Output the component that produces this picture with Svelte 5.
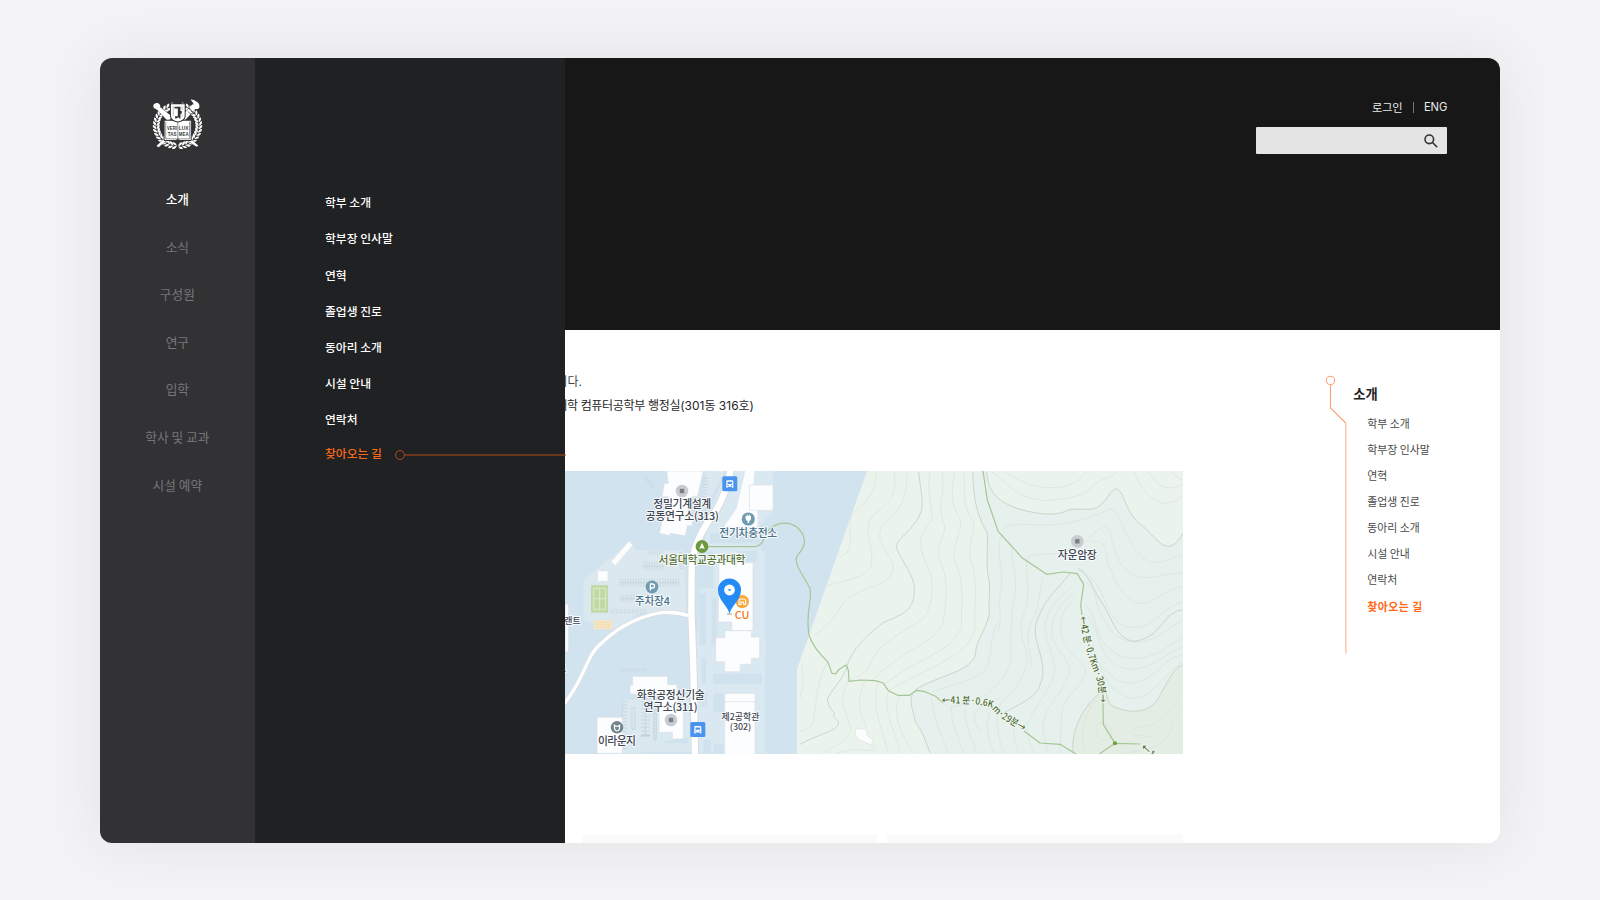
<script>
  const mainMenu = ['소개', '소식', '구성원', '연구', '입학', '학사 및 교과', '시설 예약'];
  const subMenu = ['학부 소개', '학부장 인사말', '연혁', '졸업생 진로', '동아리 소개', '시설 안내', '연락처', '찾아오는 길'];

  // Laurel leaves around the crest: pairs placed along an ellipse, left and right.
  const leaves = [];
  for (let i = 0; i < 17; i++) {
    const deg = 97 + i * 9.8;
    const a = (deg * Math.PI) / 180;
    for (const side of [1, -1]) {
      const x = 112 + side * Math.cos(a) * 65;
      const y = 109 + Math.sin(a) * 62;
      leaves.push({ x, y, r: side === 1 ? deg + 90 : 90 - deg });
    }
  }

  // Parking bays drawn as short combs: [x, y, count, height, step]
  const bays = [
    [180, 340, 23, 13, 8], [180, 353, 23, 12, 8], [252, 290, 8, 14, 8], [252, 304, 8, 12, 8], [268, 257, 6, 14, 8],
    [183, 388, 7, 12, 8], [183, 401, 7, 12, 8], [153, 432, 14, 14, 8], [183, 610, 10, 10, 8]
  ];

  // Fine contour lines on the hillside.
  const contours = [
    'M228 20C230 110 170 120 155 155C140 195 160 210 148 250C140 265 130 270 118 280',
    'M283 20C290 100 270 110 220 150C185 190 220 240 215 290C215 330 160 340 82 362',
    'M320 20C325 130 280 140 247 185C220 230 270 260 279 300C282 360 210 360 150 395C120 415 110 470 40 512',
    'M390 20C375 110 415 150 385 180C350 220 360 250 380 300C410 350 395 430 370 460C300 510 240 530 215 590C200 625 185 630 150 645',
    'M425 20C440 90 405 120 435 180C430 240 400 240 425 300C450 350 435 430 428 480C400 530 330 550 270 600Q240 620 220 645',
    'M463 20C455 90 450 110 480 160C490 205 460 220 462 280C500 360 480 430 485 480C470 550 380 570 300 625L250 660',
    'M490 20C500 90 480 110 520 170C530 200 505 220 510 280C540 360 520 430 525 490C510 560 430 590 360 625L270 675',
    'M575 20C640 70 650 100 740 107C820 100 860 90 880 60C900 40 930 45 950 20',
    'M610 20C680 60 720 75 790 65C840 50 850 30 860 20',
    'M1000 20C1030 80 1060 115 1100 115C1130 110 1140 100 1148 90', 'M1045 20C1070 65 1100 80 1148 60', 'M1115 20Q1130 40 1148 45',
    'M600 470C570 500 580 540 565 590C560 640 480 650 400 680',
    'M612 195C620 170 680 180 740 180C860 175 900 140 935 132C970 150 960 200 1020 270C1060 315 1110 280 1148 270',
    'M605 210C585 250 610 310 604 370C590 420 610 450 595 500',
    'M635 240C630 280 655 330 645 390C630 440 640 480 630 520C640 580 630 620 590 660C560 700 500 710 450 730',
    'M680 300C670 260 720 270 780 265C860 260 870 190 920 185C940 200 930 250 965 300C1020 370 1080 320 1148 325',
    'M680 300C680 350 690 390 675 440C640 500 690 550 680 600C660 670 620 690 600 720C580 760 600 830 610 865',
    'M730 335C715 380 720 430 700 460C670 510 690 570 695 600',
    'M870 230C930 220 910 270 930 310C960 390 1000 430 1050 410C1090 390 1110 370 1148 365',
    'M830 315C880 330 900 370 920 420C950 490 990 500 1050 475C1090 440 1120 420 1148 410',
    'M850 345C900 380 880 420 910 460C950 540 1010 540 1060 520C1100 500 1120 480 1148 465',
    'M820 360C780 400 740 420 735 490C740 540 760 560 765 610C760 680 680 740 680 800Q690 840 700 865',
    'M820 385C785 415 755 450 755 500C760 560 800 560 810 620C790 690 720 730 730 800L745 865',
    'M825 400C790 430 780 460 782 500C790 550 830 580 850 600C880 640 800 680 785 740L780 865',
    'M855 420C890 450 880 490 910 530C950 590 1020 590 1080 560Q1110 540 1148 520',
    'M860 450C890 480 890 520 910 560C950 630 1020 620 1070 590Q1110 560 1148 545',
    'M880 540C890 600 920 620 950 645C1000 670 1050 640 1080 610Q1120 570 1148 570',
    'M900 600C920 660 950 690 1000 700C1060 695 1080 640 1148 590',
    'M540 800C500 740 540 720 600 700', 'M455 725C450 780 480 820 490 865', 'M495 730C490 780 520 820 530 865', 'M395 700C400 770 430 820 445 865', 'M570 740C550 790 570 830 580 865', 'M640 790Q640 830 655 865',
    'M300 692C270 740 310 820 340 865', 'M265 680C245 740 290 800 300 865', 'M235 655C210 720 250 800 265 865', 'M145 648C100 720 160 760 150 800C130 840 100 840 70 865', 'M195 648C160 720 190 760 200 790',
    'M200 835C240 840 230 860 190 855C150 850 130 860 110 865', 'M85 590C50 640 50 710 40 770C30 800 10 790 0 800', 'M5 600Q15 650 0 700',
    'M890 800C880 760 920 770 935 795C940 830 900 840 890 800', 'M860 865C830 800 860 740 890 700', 'M960 865C1000 860 1060 860 1100 820C1120 790 1110 770 1148 740', 'M990 800C1000 780 1060 790 1090 760C1110 740 1110 720 1148 700', 'M1000 810L1060 815'
  ];
  const majors = [
    'M356 20C365 110 380 130 340 180C320 210 285 225 290 250C310 300 345 330 343 380C340 430 320 445 250 472C190 520 150 560 138 615C110 670 80 690 83 708C90 740 110 740 100 755C150 790 70 800 0 838',
    'M518 20C520 100 530 150 562 205C565 260 555 300 568 350C570 400 565 420 568 450C550 510 530 520 526 570C510 620 420 630 350 672C315 700 345 740 345 770C370 800 375 830 392 865',
    'M560 20C565 90 600 110 650 130C720 150 770 155 810 133L880 132C920 120 930 70 950 71C980 90 970 140 1030 185C1070 220 1080 245 1110 244Q1135 235 1148 205',
    'M820 865C810 800 850 720 905 680C930 670 910 720 950 728C1000 750 1060 740 1080 690C1110 640 1120 610 1148 600',
    'M835 310C870 330 880 380 910 420C940 470 950 520 1000 529C1060 525 1080 480 1110 450Q1130 435 1148 435',
    'M810 325C760 390 740 390 710 470C690 530 750 590 720 660C710 700 650 720 600 750'
  ];
</script>

{#snippet bus(x, y)}
  <g transform="translate({x} {y})">
    <rect width="15" height="15" rx="1.5" fill="#4a93ef" />
    <path d="M4 11.5V5.2Q4 4 5.2 4H9.8Q11 4 11 5.2V11.5H9.7V10.5H5.3V11.5ZM5.2 5.4V7.7H9.8V5.4ZM5 8.8V9.6H6.3V8.8ZM8.7 8.8V9.6H10V8.8Z" fill="#fff" fill-rule="evenodd" />
  </g>
{/snippet}

{#snippet place(x, y)}
  <circle cx={x} cy={y} r="6.3" fill="#c9cbcf" />
  <rect x={x - 2.2} y={y - 2.2} width="4.4" height="4.4" fill="#72808a" />
{/snippet}

<div class="stage">
  <div class="window">
    <nav class="rail">
      <svg class="crest" viewBox="34 24 156 156" aria-hidden="true">
        <g fill="#fff">
          {#each leaves as l}
            <g transform="translate({l.x} {l.y}) rotate({l.r})">
              <path d="M-6 0Q-1 -13 8 -10Q6 0 -6 0Z" />
              <path d="M-6 1Q-1 13 8 10Q6 1 -6 1Z" />
            </g>
          {/each}
        </g>
        <g fill="#fff" stroke="#323234" stroke-width="2" paint-order="stroke">
          <path d="M44 57C34 52 37 39 49 39C56 39 61 46 59 52L97 82L83 95L52 62Q49 59 44 57Z" />
          <path d="M152 29Q163 28 168 34Q181 40 179 52Q177 60 166 58L158 65L148 54L155 46Q159 41 162 45Q160 36 152 29Z" />
          <path d="M146 57L157 68L130 97L118 84Z" />
          <path d="M48 170L69 151L75 157L57 172L53 175ZM176 170L151 148L144 155L170 173Z" />
        </g>
        <path d="M153 63L163 72L153 73L143 65" fill="none" stroke="#323234" stroke-width="2" />
        <path d="M71 92H154V154H119L113 150L107 154H71Z" fill="#fff" stroke="#323234" stroke-width="3" />
        <path d="M76 97V149H109L113 146L117 149H149V97M113 96V148" fill="none" stroke="#5b5b5d" stroke-width="2" />
        <path d="M89 40H137V80Q135 97 113 99Q91 97 89 80Z" fill="#323234" />
        <path d="M92 43H134V79Q133 92 113 96Q93 92 92 79Z" fill="#fff" />
        <path d="M103 51H121V64H125V72H121V88L114 83L106 88L104 80H113V56H103Z" fill="#323234" />
        <path d="M99 49V78M126 49V60M126 75V80" stroke="#999" stroke-width="2" />
        <g class="motto" fill="#3a3a3c">
          <text x="80" y="122" textLength="30" lengthAdjust="spacingAndGlyphs">VERI</text>
          <text x="116" y="122" textLength="30" lengthAdjust="spacingAndGlyphs">LUX</text>
          <text x="82" y="140" textLength="27" lengthAdjust="spacingAndGlyphs">TAS</text>
          <text x="116" y="140" textLength="30" lengthAdjust="spacingAndGlyphs">MEA</text>
        </g>
      </svg>
      <ul>
        {#each mainMenu as item, i}
          <li class:active={i === 0}>{item}</li>
        {/each}
      </ul>
    </nav>

    <nav class="panel">
      <ul>
        {#each subMenu as item, i}
          <li class:current={i === 7}>
            <span>{item}</span>
            {#if i === 7}
              <svg class="thread" viewBox="0 0 171 10"><circle cx="5" cy="5" r="4.4" /><path d="M9.5 5H171" /></svg>
            {/if}
          </li>
        {/each}
      </ul>
    </nav>

    <div class="page">
      <header>
        <div class="tools"><span class="login">로그인</span><i></i><span>ENG</span></div>
        <div class="search">
          <svg viewBox="0 0 14 14"><circle cx="5.3" cy="5.3" r="4.3" /><path d="M8.5 8.5L13.2 13.2" /></svg>
        </div>
      </header>

      <div class="body">
        <main>
          <div class="copy">
            <p>니다.</p>
            <p><span class="tight">대학 컴퓨터공학부 행정실</span>(301동 316호)</p>
          </div>

          <svg class="map" viewBox="565 471 618 283">
            <rect x="565" y="471" width="618" height="283" fill="#d1e3ef" />
            <g transform="translate(560 465) scale(.33333)">
              <path d="M70 345L215 225L228 255H372L378 440L340 445H240L165 490L70 465Z" fill="#dbe8f0" />
              <path d="M460 110L500 18H640V140L600 180L585 235L615 265V865H410L408 570L430 240Z" fill="#dae8f1" />
              <path d="M440 18H495L440 120L415 150Z" fill="#dbe8f0" />
              <path d="M185 705H395V865H185Z" fill="#dae8f0" />
              <g fill="#cfe2ee">
                <path d="M418 260H460V370H418ZM418 385H438V540H418ZM455 400H470V540H455ZM425 580H438V655H425ZM460 627H606V658H460ZM425 680H440V725H425ZM460 685H495V742H460ZM430 825H452V865H430ZM462 838H490V865H462ZM535 258H590V290H535ZM310 830L365 820H385V835H310ZM248 860H395V865H248ZM450 205H585V235H450Z" />
              </g>
              <g stroke="#c3d0d9" stroke-width="2" fill="none">
                {#each bays as [x, y, n, h, s]}
                  {#each Array(n) as _, k}
                    <path d="M{x + k * s} {y}v{h}" />
                  {/each}
                {/each}
                <path d="M180 353H356M252 304H312M183 401H235" />
                {#each Array(15) as _, k}
                  <path d="M187 {710 + k * 10}h14M243 {710 + k * 11 > 812 ? 812 : 710 + k * 11}h26M281 {728 + k * 7}h8" />
                {/each}
                <path d="M187 705V790M216 728h9v65h-9zM256 700V815M281 725v97h8V725" />
                {#each Array(8) as _, k}
                  <path d="M{250 + k * 4} {38 + k * 5}l9 -7M{430 - k} {40 + k * 9}h16M358 {262 + k * 7}h14" />
                {/each}
              </g>
              <!-- buildings -->
              <g fill="#fcfdfe" stroke="#dcdfe5" stroke-width="2">
                <path d="M320 18H430L412 95H396L390 120L383 152H397V182H382L376 212L331 205L329 212L298 205L308 160H320L326 95H306L313 55H325Z" />
                <path d="M556 18H583L580 60H568V135H592V185H492L530 130Z" stroke="none" />
                <path d="M568 60H639V136H568Z" />
                <path d="M206 229L219 240L166 302L153 290Z" />
                <path d="M112 317H144V349H112ZM16 418H25V560H16Z" />
                <path d="M477 293H579V497H515V471H475Z" />
                <path d="M495 497H574V516H599V580H574V598H541V620H494V590H467V518H495Z" />
                <path d="M218 634H323V659H351V735H370V822H337V802H297V690H250L210 686V660H218Z" />
                <path d="M111 757H187V865H111Z" />
                <path d="M494 685H585V870H494ZM494 710H585" />
              </g>
              <rect x="93" y="360" width="51" height="83" fill="#c1daa5" />
              <path d="M101 370h36v63h-36zM119 370v63M101 401h36" fill="none" stroke="#e8f1da" stroke-width="2" />
              <rect x="101" y="466" width="55" height="27" fill="#f7e6c4" />
              <path d="M108 472h40v15h-40zM128 472v15M108 479h40" fill="none" stroke="#e8ca91" />
              <!-- roads -->
              <g fill="none" stroke-linejoin="round">
                <path d="M10 720C80 635 75 570 130 530C180 480 250 450 310 442Q350 440 390 453" stroke="#d9dce1" stroke-width="14" />
                <path d="M512 14C500 70 480 125 455 155C415 210 397 260 395 310L394 435L400 600L405 870" stroke="#d8dce2" stroke-width="25" />
                <path d="M10 720C80 635 75 570 130 530C180 480 250 450 310 442Q350 440 390 453" stroke="#fff" stroke-width="10" />
                <path d="M512 14C500 70 480 125 455 155C415 210 397 260 395 310L394 435L400 600L405 870" stroke="#fff" stroke-width="19" />
              </g>
            </g>

            <!-- hillside -->
            <g transform="translate(800 465) scale(.33333)">
              <path d="M201 18H1150V868H-9V612Z" fill="#ebf3ed" />
              <path d="M518 18C520 100 530 150 562 205C565 260 555 300 568 350V450C550 510 530 520 526 570C510 620 420 630 350 672C315 700 345 740 345 770C370 800 375 830 392 868H1150V205Q1135 235 1110 244C1080 245 1070 220 1030 185C970 140 980 90 950 71C930 70 920 120 880 132L810 133C770 155 720 150 650 130C600 110 565 90 560 18Z" fill="#e6f0ec" />
              <path d="M820 868C810 800 850 720 905 680C930 670 910 720 950 728C1000 750 1060 740 1080 690C1110 640 1120 610 1150 600V868Z" fill="#e3ede4" />
              <g fill="none" stroke="#d9e2da" stroke-width="2">
                {#each contours as d}<path {d} />{/each}
              </g>
              <g fill="none" stroke="#c4cfc5" stroke-width="2.5">
                {#each majors as d}<path {d} />{/each}
              </g>
              <path d="M168 792H198L202 812L218 824L214 840L180 826L166 812Z" fill="#fbfdfc" stroke="#dfe3df" stroke-width="2" />
              <g fill="none" stroke="#a4c693" stroke-width="3.5" stroke-linejoin="round">
                <path d="M-274 245H-135C-105 240 -113 215 -90 190C-55 165 -15 170 7 205C25 240 0 260 -10 275C-18 300 10 330 30 370C38 410 15 440 27 510C40 550 65 570 84 592L96 625L108 626L116 614L138 600L145 615L147 649L182 645L225 647L250 654L265 677L293 691H328L350 676L375 680L407 694L430 714" />
                <path d="M549 18L562 105L595 200L668 280L740 328L790 321L832 326L851 358L842 420L846 450M909 713L910 778L945 835L1020 837M945 835L898 867M672 798L720 834L780 838L828 867" />
              </g>
              <circle cx="945" cy="835" r="6" fill="#739b45" />
              <path id="trail-a" d="M426 717Q520 711 572 727Q588 750 610 763L680 806" fill="none" />
              <path id="trail-b" d="M838 455Q852 550 880 615Q901 665 898 725" fill="none" />
              <g class="trail">
                <text><textPath href="#trail-a" textLength="270" lengthAdjust="spacingAndGlyphs">←41 분·0.6Km·29분→</textPath></text>
                <text><textPath href="#trail-b" textLength="266" lengthAdjust="spacingAndGlyphs">←42 분·0.7Km·30분→</textPath></text>
                <text transform="translate(1020 850) rotate(42)">←1</text>
              </g>
            </g>

            {@render place(682, 491)}
            {@render place(1077.3, 541.3)}
            {@render place(671, 720)}
            {@render bus(722.3, 476.3)}
            {@render bus(690.3, 722)}

            <circle cx="748.3" cy="519" r="6.6" fill="#6f9bb0" />
            <path d="M745.6 515.8h1.2v-1.4h.8v1.4h1.4v-1.4h.8v1.4h1.2v3q-.3 1.8-1.8 2.2v2h-1.6v-2q-1.7-.4-2-2.2Z" fill="#fff" />
            <circle cx="702" cy="546.5" r="6.4" fill="#6b993d" />
            <path d="M702 542.8L704.8 549L702 548L699.2 549Z" fill="#fff" />
            <circle cx="652" cy="587" r="6.4" fill="#6f9bb0" />
            <path d="M650.4 590.5V584h2.1a2 2 0 0 1 0 4h-2.1" fill="none" stroke="#fff" stroke-width="1.3" />
            <circle cx="617" cy="727.3" r="6.2" fill="#71838d" />
            <path d="M614.4 725.2Q614 731 617 731Q620 731 619.6 725.2Q617 727.5 614.4 725.2Z" fill="none" stroke="#fff" stroke-width="1.2" />
            <circle cx="742.3" cy="601.5" r="6.6" fill="#f9a63b" />
            <path d="M739 604.5V600.5Q739 599 740.5 599H744Q745.7 599 745.7 600.5V604.5H743.7V602H741V604.5Z" fill="none" stroke="#fff" stroke-width="1.1" />
            <path d="M729.5 614C728 606 718 600 718 590A11.5 11.5 0 0 1 741 590C741 600 731 606 729.5 614Z" fill="#248af6" />
            <circle cx="729.5" cy="590" r="5.4" fill="#fff" />
            <path d="M727.5 589.2H731.5L729.5 591.3Z" fill="#248af6" />
            <path d="M727 614H732" stroke="#8d9cab" stroke-width="1" />

            <g class="labels">
              <text x="682.3" y="508" textLength="58">정밀기계설계</text>
              <text x="682.3" y="520" textLength="73">공동연구소(313)</text>
              <text class="steel" x="748.3" y="536.7" textLength="58">전기차충전소</text>
              <text class="green" x="702" y="563.7" textLength="87">서울대학교공과대학</text>
              <text class="steel" x="652.3" y="604.5" textLength="35">주차장4</text>
              <text class="orange" x="742" y="618.6">CU</text>
              <text class="small" x="572.5" y="624">랜트</text>
              <text class="small" x="562" y="672">로</text>
              <text x="670.8" y="699" textLength="68">화학공정신기술</text>
              <text x="670.5" y="711" textLength="54">연구소(311)</text>
              <text class="small" x="740.5" y="720" textLength="38">제2공학관</text>
              <text class="small" x="740.5" y="730">(302)</text>
              <text x="617" y="744.5" textLength="38">이라운지</text>
              <text x="1077.3" y="558.7" textLength="39">자운암장</text>
            </g>
          </svg>

          <div class="cards"><div></div><div></div></div>
        </main>

        <aside>
          <svg class="path" viewBox="0 0 22 280">
            <circle cx="5.5" cy="5.5" r="4.2" />
            <path d="M5.5 9.7V33L20.7 48" />
            <path class="tail" d="M20.8 48V278.5" />
          </svg>
          <div class="toc">
            <h2>소개</h2>
            <ul>
              {#each subMenu as item, i}
                <li class:current={i === 7}>{item}</li>
              {/each}
            </ul>
          </div>
        </aside>
      </div>
    </div>
  </div>
</div>

<style>
  :global(body) { margin: 0; overflow: hidden; }
  ul { list-style: none; margin: 0; padding: 0; }
  svg { display: block; }
  .stage {
    width: 1600px; height: 900px; box-sizing: border-box; padding-top: 58px;
    display: flex; justify-content: center; align-items: flex-start;
    background: #f3f3f5;
    font-family: "Noto Sans CJK KR", sans-serif;
  }
  .window {
    width: 1400px; height: 785px; display: flex; overflow: hidden;
    border-radius: 12px; background: #fff; box-shadow: 0 0 56px rgba(0, 0, 0, .07);
  }
  .rail { width: 155px; flex: none; background: #323234; display: flex; flex-direction: column; align-items: center; }
  .crest { width: 51px; height: 51px; margin: 40px 0 25.9px; }
  .rail ul { margin-right: .4px; }
  .motto { font: 700 17px "Liberation Sans", sans-serif; }
  .rail li {
    height: 47.65px; line-height: 47.65px; text-align: center;
    font-size: 12.7px; font-weight: 400; color: #77777a; white-space: nowrap;
  }
  .rail li.active { color: #fff; font-weight: 500; }

  .panel { width: 310px; flex: none; background: #202122; padding: 125.7px 0 0 70px; box-sizing: border-box; }
  .panel li {
    height: 36.18px; display: flex; align-items: center;
    font-size: 11.8px; font-weight: 500; color: #fff; white-space: nowrap;
  }
  .panel li.current { color: #f76a1c; height: 32px; }
  .thread { width: 171px; height: 10px; margin: 4px 0 0 13px; flex: none; fill: none; stroke: #b04d17; }

  .page { flex: 1; min-width: 0; display: flex; flex-direction: column; }
  header {
    height: 272px; flex: none; box-sizing: border-box; background: #171717; padding: 40px 52.6px 0 0;
    display: flex; flex-direction: column; align-items: flex-end;
  }
  .tools { display: flex; align-items: center; height: 18px; font: 400 11.2px Inter, "Noto Sans CJK KR", sans-serif; color: #e9e9e9; }
  .login { letter-spacing: -.2px; }
  .tools i { width: 1px; height: 11px; margin: 0 10px 0 10.5px; background: #777; }
  .search {
    margin-top: 11.3px; width: 191px; height: 27px; box-sizing: border-box; border-radius: 1px; background: #e4e4e4;
    display: flex; align-items: center; justify-content: flex-end; padding-right: 9px;
  }
  .search svg { width: 14px; height: 14px; fill: none; stroke: #333; stroke-width: 1.6; }

  .body { flex: 1; min-height: 0; display: flex; }
  main { width: 618px; flex: none; display: flex; flex-direction: column; padding-top: 39.5px; }
  .copy { height: 101.5px; overflow: hidden; font: 400 12px Inter, "Noto Sans CJK KR", sans-serif; color: #262626; }
  .copy p { margin: 0; height: 24.5px; line-height: 24.5px; display: flex; justify-content: flex-end; white-space: nowrap; }
  .copy p:first-child { width: 17px; color: #444; }
  .copy p:last-child { width: 189px; }
  .tight { letter-spacing: -.32px; }
  .map { width: 618px; height: 283px; flex: none; }
  .cards { margin: 80px 0 0 16.5px; display: grid; grid-template-columns: 1fr 1fr; gap: 10px; height: 9px; }
  .cards div { background: #fafafa; border-radius: 2px 2px 0 0; }

  .labels { font-size: 10.8px; font-weight: 500; text-anchor: middle; fill: #3f4653; stroke: #fff; stroke-width: 2px; stroke-opacity: .85; paint-order: stroke; stroke-linejoin: round; }
  .small { font-size: 8.9px; }
  .steel { fill: #477288; }
  .green { fill: #567236; }
  .orange { fill: #ed7b26; }
  .trail { font-size: 29px; font-weight: 500; fill: #4d6b37; stroke: #f4f9f2; stroke-width: 5px; paint-order: stroke; }

  aside { margin-left: 142px; padding-top: 45px; display: flex; align-items: flex-start; }
  .path { width: 22px; height: 280px; fill: none; stroke: #fba078; stroke-width: 1.1; }
  .path .tail { stroke: #fcc3a8; stroke-width: 1.4; }
  .toc { padding: 5.6px 0 0 6.2px; }
  h2 { margin: 0; height: 29px; line-height: 29px; font-size: 13.3px; font-weight: 700; color: #222; transform: translateY(-2px); }
  .toc li { height: 26.15px; line-height: 26.15px; padding-left: 14px; font-size: 10.9px; color: #494949; white-space: nowrap; }
  .toc li.current { color: #ff6914; font-weight: 700; letter-spacing: .5px; }
</style>
